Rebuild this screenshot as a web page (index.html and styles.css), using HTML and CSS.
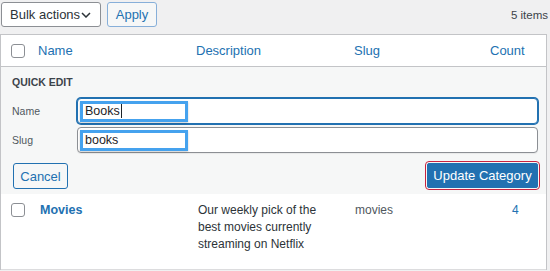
FILE: index.html
```html
<!DOCTYPE html>
<html>
<head>
  <title>Categories</title>
  <link rel="stylesheet" href="styles.css">
</head>
<body>
  <div class="toolbar">
    <div class="bulk">
      <span>Bulk actions</span>
      <svg width="10" height="6" viewBox="0 0 10 6"><path d="M1 1l4 4 4-4" fill="none" stroke="#2c3338" stroke-width="1.5"/></svg>
    </div>
    <button class="btn-apply">Apply</button>
    <div class="count">5 items</div>
  </div>

  <div class="list">
    <div class="row head">
      <div class="cell check"><span class="box"></span></div>
      <div class="cell">Name</div>
      <div class="cell">Description</div>
      <div class="cell">Slug</div>
      <div class="cell">Count</div>
    </div>

    <div class="quick-edit">
      <div class="qe-title">QUICK EDIT</div>
      <div class="qe-fields">
        <label>Name</label>
        <div class="field focused">
          <span>Books</span><span class="caret"></span>
          <span class="mark"></span>
        </div>
        <label>Slug</label>
        <div class="field">
          <span>books</span>
          <span class="mark"></span>
        </div>
      </div>
      <div class="qe-actions">
        <button class="btn-cancel">Cancel</button>
        <button class="btn-update">Update Category</button>
      </div>
    </div>

    <div class="row item">
      <div class="cell check"><span class="box"></span></div>
      <div class="cell title">Movies</div>
      <div class="cell desc">Our weekly pick of the best movies currently streaming on Netflix</div>
      <div class="cell slug">movies</div>
      <div class="cell num">4</div>
    </div>
  </div>
</body>
</html>
```

FILE: styles.css
```css
body {
  margin: 0;
  background-color: #f0f0f1;
  font-family: "Liberation Sans", Arial, sans-serif;
  font-size: 13px;
  color: #2c3338;
  overflow: hidden;
}

.toolbar {
  display: flex;
  align-items: center;
  gap: 6px;
  height: 25px;
  padding: 2px 2px 0 1px;
}

.bulk {
  box-sizing: border-box;
  width: 100px;
  height: 25px;
  display: flex;
  align-items: center;
  justify-content: space-between;
  padding: 0 9px 0 8px;
  background-color: #fff;
  border: 1px solid #8c8f94;
  border-radius: 3px;
  font-size: 13px;
}

.btn-apply {
  box-sizing: border-box;
  width: 50px;
  height: 25px;
  background-color: #f6f7f7;
  border: 1px solid #87afd9;
  border-radius: 3px;
  color: #2271b1;
  font-family: inherit;
  font-size: 13px;
  padding: 0;
}

.count {
  margin-left: auto;
  font-size: 11.5px;
  color: #3c434a;
}

.list {
  margin-top: 7px;
  width: 545px;
  background-color: #fff;
  border: 1px solid #c3c4c7;
  border-bottom: none;
}

.row {
  display: grid;
  grid-template-columns: 37px 158px 158px 136px 1fr;
}

.head {
  height: 31px;
  align-items: center;
  border-bottom: 1px solid #c3c4c7;
  color: #2271b1;
}

.check {
  padding-left: 10px;
}

.box {
  display: block;
  box-sizing: border-box;
  width: 14px;
  height: 14px;
  background-color: #fff;
  border: 1px solid #8c8f94;
  border-radius: 3px;
}

.quick-edit {
  height: 127px;
  box-sizing: border-box;
  padding: 9px 8px 0 0;
  background-color: #f6f7f7;
}

.qe-title {
  padding-left: 11px;
  font-size: 10.5px;
  font-weight: bold;
  line-height: 12px;
  color: #3c434a;
}

.qe-fields {
  display: grid;
  grid-template-columns: 76px 1fr;
  row-gap: 3px;
  align-items: center;
  margin-top: 10px;
}

.qe-fields label {
  padding-left: 11px;
  font-size: 10.5px;
  color: #50575e;
}

.field {
  position: relative;
  box-sizing: border-box;
  height: 26px;
  display: flex;
  align-items: center;
  padding-left: 7px;
  background-color: #fff;
  border: 1px solid #8c8f94;
  border-radius: 4px;
  font-size: 12.5px;
  color: #1d2327;
  box-shadow: 0 1px 1px rgba(0, 0, 0, 0.06);
}

.field.focused {
  border-color: #2271b1;
  box-shadow: 0 0 0 1px #2271b1;
}

.caret {
  width: 1px;
  height: 14px;
  margin-left: 1px;
  background-color: #1d2327;
}

/* highlight boxes drawn over the fields */
.mark {
  position: absolute;
  left: 2px;
  top: 2px;
  box-sizing: border-box;
  width: 108px;
  height: 21px;
  border: 3px solid #45a2ee;
  box-shadow: 0 1px 2px rgba(0, 0, 0, 0.2);
}

.qe-actions {
  display: flex;
  justify-content: space-between;
  margin-top: 10px;
  padding-left: 12px;
}

.btn-cancel {
  box-sizing: border-box;
  width: 55px;
  height: 26px;
  padding: 0;
  background-color: #f6f7f7;
  border: 1px solid #2271b1;
  border-radius: 3px;
  color: #2271b1;
  font-family: inherit;
  font-size: 13px;
}

.btn-update {
  box-sizing: border-box;
  width: 111px;
  height: 25px;
  padding: 0;
  background-color: #2271b1;
  border: 1px solid #2271b1;
  border-radius: 2px;
  color: #fff;
  font-family: inherit;
  font-size: 13px;
  outline: 1px solid #c8233f;
  outline-offset: 1px;
}

.item {
  height: 76px;
  padding-top: 8px;
  box-sizing: border-box;
  border-bottom: 1px solid #dcdcde;
  font-size: 12px;
  line-height: 17px;
}

.item .check {
  padding-top: 1px;
}

.title {
  padding-left: 2px;
  font-size: 12.5px;
  font-weight: bold;
  color: #2271b1;
}

.desc {
  padding-left: 2px;
  padding-right: 16px;
  color: #2c3338;
}

.slug {
  padding-left: 1px;
  color: #50575e;
}

.num {
  padding-left: 22px;
  color: #2271b1;
}
```
